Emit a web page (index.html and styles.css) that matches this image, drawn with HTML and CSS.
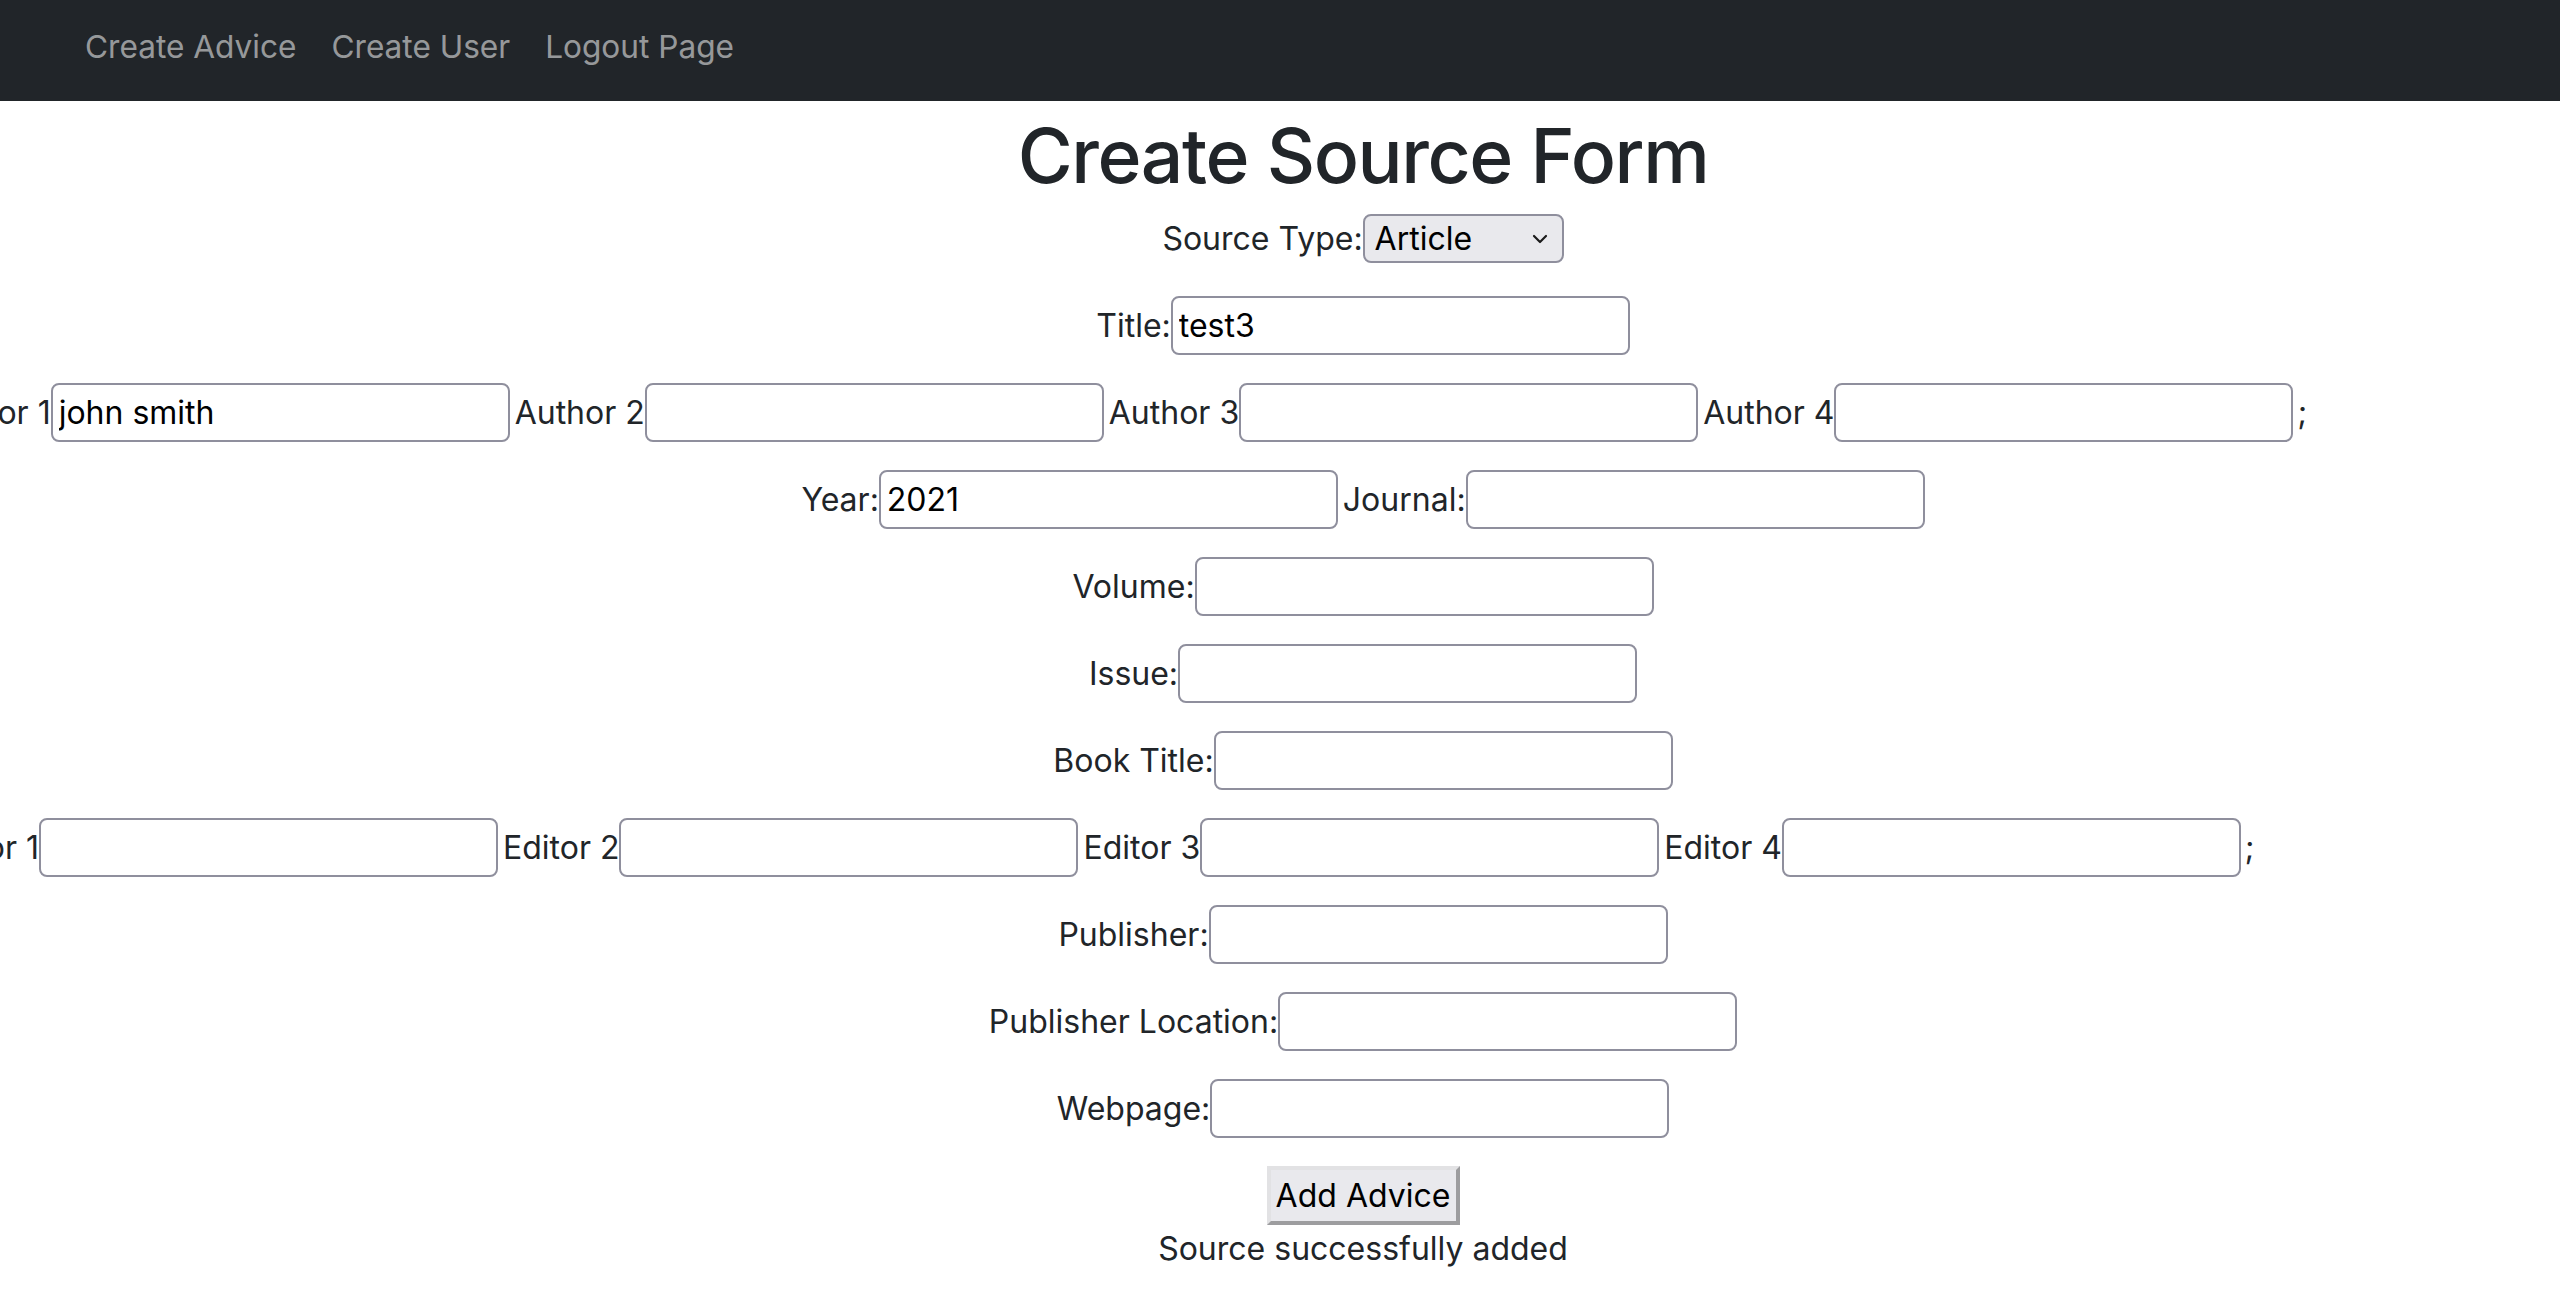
FILE: index.html
```html
<!DOCTYPE html>
<html lang="en">
<head>
<meta charset="utf-8">
<title>Create Source Form</title>
<link rel="stylesheet" href="styles.css">
</head>
<body>
<nav class="navbar">
  <a class="nav-link" href="#">Create Advice</a>
  <a class="nav-link" href="#">Create User</a>
  <a class="nav-link" href="#">Logout Page</a>
</nav>
<main class="page">
  <h1 class="title">Create Source Form</h1>
  <form class="form">
    <div class="row">
      <label class="label">Source Type:</label>
      <span class="select-wrap">
        <select class="select"><option>Article</option><option>Book</option><option>Webpage</option></select>
        <svg class="chev" viewBox="0 0 16 10" width="16" height="10"><path d="M2 2 L8 8 L14 2" fill="none" stroke="#1b1b1b" stroke-width="2.2" stroke-linecap="round" stroke-linejoin="round"/></svg>
      </span>
    </div>
    <div class="row">
      <label class="label">Title:</label><input class="input" type="text" value="test3">
    </div>
    <div class="row row-wide row-authors">
      <span class="field"><label class="label">Author 1</label><input class="input" type="text" value="john smith"></span>
      <span class="field"><label class="label">Author 2</label><input class="input" type="text"></span>
      <span class="field"><label class="label">Author 3</label><input class="input" type="text"></span>
      <span class="field"><label class="label">Author 4</label><input class="input" type="text"></span>
      <span class="semi">;</span>
    </div>
    <div class="row">
      <span class="field"><label class="label">Year:</label><input class="input" type="text" value="2021"></span>
      <span class="field"><label class="label">Journal:</label><input class="input" type="text"></span>
    </div>
    <div class="row">
      <label class="label">Volume:</label><input class="input" type="text">
    </div>
    <div class="row">
      <label class="label">Issue:</label><input class="input" type="text">
    </div>
    <div class="row">
      <label class="label">Book Title:</label><input class="input" type="text">
    </div>
    <div class="row row-wide row-editors">
      <span class="field"><label class="label">Editor 1</label><input class="input" type="text"></span>
      <span class="field"><label class="label">Editor 2</label><input class="input" type="text"></span>
      <span class="field"><label class="label">Editor 3</label><input class="input" type="text"></span>
      <span class="field"><label class="label">Editor 4</label><input class="input" type="text"></span>
      <span class="semi">;</span>
    </div>
    <div class="row">
      <label class="label">Publisher:</label><input class="input" type="text">
    </div>
    <div class="row">
      <label class="label">Publisher Location:</label><input class="input" type="text">
    </div>
    <div class="row">
      <label class="label">Webpage:</label><input class="input" type="text">
    </div>
    <div class="row">
      <button class="btn" type="button">Add Advice</button>
    </div>
  </form>
  <p class="msg">Source successfully added</p>
</main>
</body>
</html>
```

FILE: styles.css
```css
html, body {
  margin: 0;
  padding: 0;
}

body {
  font-family: Inter, "Noto Sans", "Liberation Sans", sans-serif;
  font-size: 32px;
  color: #212529;
  background: #ffffff;
  overflow-x: hidden;
}

.navbar {
  height: 101px;
  box-sizing: border-box;
  background: #212529;
  display: flex;
  align-items: center;
  gap: 35px;
  padding: 0 0 7px 85px;
}

.nav-link {
  color: rgba(255, 255, 255, 0.55);
  text-decoration: none;
  font-size: 31.6px;
  line-height: 48px;
}

.page {
  margin-left: 166px;
  display: flex;
  flex-direction: column;
  align-items: center;
}

.title {
  margin: 8px 0 6px;
  font-size: 75px;
  font-weight: 500;
  line-height: 94px;
  letter-spacing: -1.4px;
  color: #212529;
}

.form {
  display: flex;
  flex-direction: column;
  align-items: center;
  gap: 28px;
  align-self: stretch;
}

.row {
  height: 59px;
  display: flex;
  align-items: center;
  justify-content: center;
  white-space: nowrap;
}

.row-wide {
  align-self: flex-start;
}

.row-authors {
  margin-left: -239px;
}

.row-editors {
  margin-left: -237px;
}

.field {
  display: flex;
  align-items: center;
}

.field + .field {
  margin-left: 5px;
}

.label {
  line-height: 48px;
}

.input {
  width: 459px;
  height: 59px;
  box-sizing: border-box;
  border: 2px solid #8f8f9d;
  border-radius: 8px;
  padding: 0 6px;
  margin: 0;
  font-family: inherit;
  font-size: 32px;
  color: #000000;
  background: #ffffff;
}

.semi {
  margin-left: 4px;
}

.select-wrap {
  position: relative;
  display: inline-flex;
}

.select {
  appearance: none;
  -webkit-appearance: none;
  width: 201px;
  height: 49px;
  box-sizing: border-box;
  border: 2px solid #8f8f9d;
  border-radius: 8px;
  background: #e9e9ed;
  padding: 0 0 0 10px;
  margin: 0;
  font-family: inherit;
  font-size: 32px;
  color: #000000;
}

.chev {
  position: absolute;
  right: 16px;
  top: 20px;
  pointer-events: none;
}

.btn {
  width: 193px;
  height: 59px;
  box-sizing: border-box;
  background: #e9e9ed;
  border-style: solid;
  border-width: 4px;
  border-color: #e2e2e4 #9d9d9f #9d9d9f #e2e2e4;
  padding: 0;
  margin: 0;
  font-family: inherit;
  font-size: 32px;
  color: #000000;
}

.msg {
  margin: 0;
  line-height: 48px;
  text-align: center;
}
```
